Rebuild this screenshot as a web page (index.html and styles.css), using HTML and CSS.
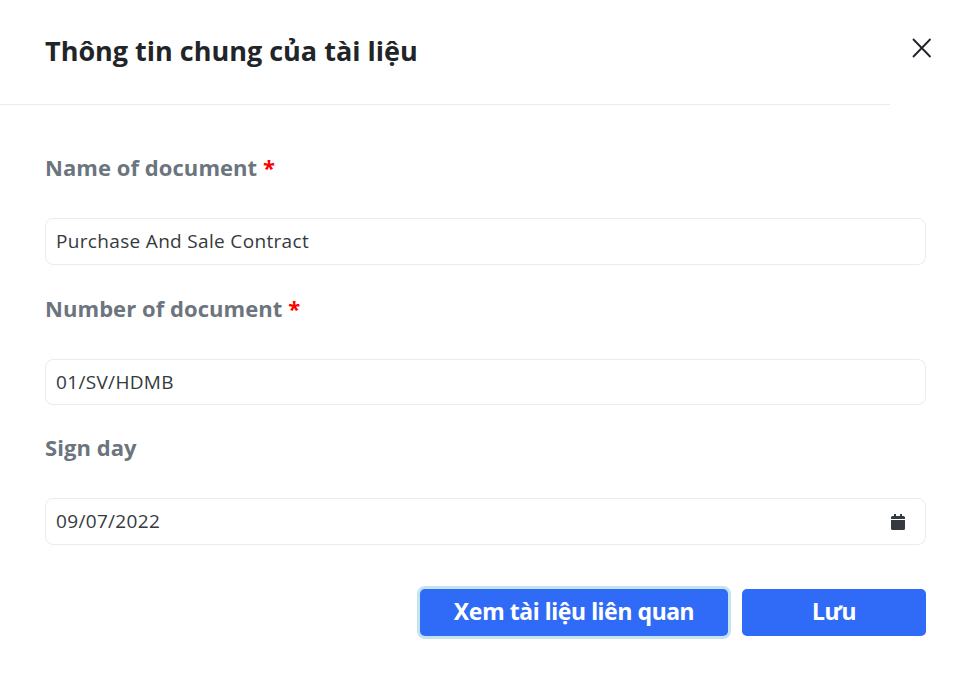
FILE: index.html
```html
<!DOCTYPE html>
<html lang="vi">
<head>
<meta charset="utf-8">
<title>Thông tin chung của tài liệu</title>
<link rel="stylesheet" href="styles.css">
</head>
<body>
<main class="modal">
  <header class="modal-header">
    <h1 class="modal-title">Thông tin chung của tài liệu</h1>
  </header>
  <button class="close" type="button" aria-label="Close">
    <svg viewBox="0 0 20 20" width="20" height="20" aria-hidden="true"><path d="M1 1 L18.500 19 M18.500 1 L1 19" fill="none" stroke="#212529" stroke-width="1.9"/></svg>
  </button>
  <form class="modal-body">
    <div class="field field-name">
      <label class="field-label">Name of document <span class="req">*</span></label>
      <div class="input">Purchase And Sale Contract</div>
    </div>
    <div class="field field-number">
      <label class="field-label">Number of document <span class="req">*</span></label>
      <div class="input input-short">01/SV/HDMB</div>
    </div>
    <div class="field">
      <label class="field-label">Sign day</label>
      <div class="input input-date">
        <span>09/07/2022</span>
        <svg class="cal" viewBox="0 0 14 16" width="14" height="16" aria-hidden="true"><path fill="#343a40" d="M3 0h2v2h4V0h2v2h1.500A1.500 1.500 0 0 1 14 3.500V5H0V3.500A1.500 1.500 0 0 1 1.500 2H3zM0 6h14v8.500a1.500 1.500 0 0 1-1.500 1.500h-11A1.500 1.500 0 0 1 0 14.500z"/></svg>
      </div>
    </div>
    <div class="actions">
      <button class="btn btn-focus" type="button">Xem tài liệu liên quan</button>
      <button class="btn btn-save" type="button">Lưu</button>
    </div>
  </form>
</main>
</body>
</html>
```
FILE: styles.css
```css
* { box-sizing: border-box; }
html, body { margin: 0; height: 100%; background: #fff; overflow: hidden; }
body { font-family: "Open Sans", "Noto Sans", sans-serif; color: #212529; }
.modal { position: relative; width: 977px; height: 677px; }
.modal-header { width: 890px; height: 105px; padding: 30px 0 0 45px; border-bottom: 1px solid #e9ecef; }
.modal-title { margin: 0; font-size: 27px; line-height: 42px; font-weight: 700; color: #212529; }
.close { position: absolute; top: 38px; left: 912px; width: 20px; height: 20px; padding: 0; border: 0; background: none; display: block; }
.close svg { display: block; }
.modal-body { padding: 44px 51px 0 45px; display: flex; flex-direction: column; }
.field { height: 140px; }
.field-name { height: 141px; }
.field-number { height: 139px; }
.field-label { display: block; height: 69px; font-size: 22px; line-height: 36px; font-weight: 700; letter-spacing: 0.06px; color: #6c757d; }
.req { color: #f00; }
.input { height: 47px; padding: 0 10px; border: 1px solid #e9ecef; border-radius: 8px; font-size: 19px; line-height: 45px; letter-spacing: 0.33px; color: #343a40; background: #fff; }
.input-short { height: 46px; line-height: 44px; }
.input-date { display: flex; align-items: center; justify-content: space-between; padding-right: 20px; }
.cal { display: block; }
.actions { display: flex; justify-content: flex-end; gap: 14px; margin-top: 20px; }
.btn { height: 47px; border: 0; border-radius: 5px; background: #2f6bf6; color: #fff; font-family: "Noto Sans", "Open Sans", sans-serif; font-size: 23px; font-weight: 700; padding: 0 0 3px; letter-spacing: -0.4px; }
.btn-focus { width: 308px; box-shadow: 0 0 0 3px #c3e3ef; }
.btn-save { width: 184px; }
```
